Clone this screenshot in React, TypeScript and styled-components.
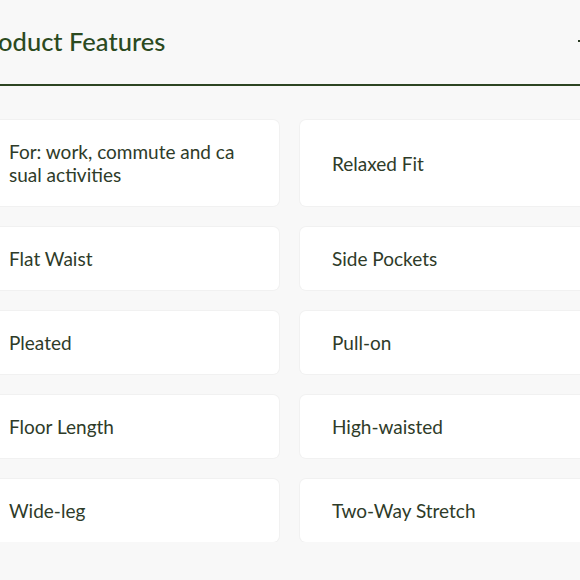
import React from "react";
import styled, { createGlobalStyle } from "styled-components";

const Global = createGlobalStyle`
  html, body { margin: 0; padding: 0; background: #f8f8f8; overflow: hidden; }
  body { font-family: Lato, "Open Sans", sans-serif; }
`;

const Section = styled.section`
  margin-left: -23px;
  width: 625px;
`;

const Header = styled.header`
  display: flex;
  align-items: center;
  justify-content: space-between;
  height: 86px;
  box-sizing: border-box;
  padding: 0 10px 2px 0;
  border-bottom: 2px solid #2d4522;
`;

const Title = styled.h2`
  margin: 0 0 0 -3px;
  font-size: 25.5px;
  font-weight: 500;
  color: #2b4a1f;
`;

const Toggle = styled.span`
  display: inline-block;
  width: 14px;
  height: 2px;
  background: #2b3a22;
`;

const Grid = styled.ul`
  list-style: none;
  margin: 34px 0 0;
  padding: 0;
  display: grid;
  grid-template-columns: 302px 302px;
  column-gap: 21px;
  row-gap: 21px;
`;

const Card = styled.li`
  background: #ffffff;
  border-radius: 6px;
  padding: 20px 40px 20px 32px;
  font-size: 19px;
  line-height: 23px;
  color: #2e3b29;
  word-break: break-all;
  display: flex;
  align-items: center;
  box-shadow: 0 0 0 1px #f1f1f1;
`;

const features = [
  "For: work, commute and casual activities",
  "Relaxed Fit",
  "Flat Waist",
  "Side Pockets",
  "Pleated",
  "Pull-on",
  "Floor Length",
  "High-waisted",
  "Wide-leg",
  "Two-Way Stretch",
];

export default function App() {
  return (
    <>
      <Global />
      <Section>
        <Header>
          <Title>Product Features</Title>
          <Toggle aria-label="collapse" />
        </Header>
        <Grid>
          {features.map((f) => (
            <Card key={f}>{f}</Card>
          ))}
        </Grid>
      </Section>
    </>
  );
}
